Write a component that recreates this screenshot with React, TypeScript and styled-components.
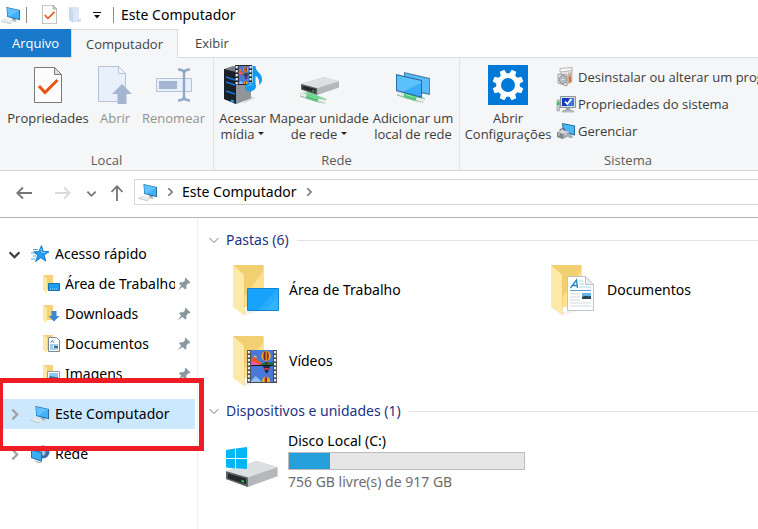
import React from "react";
import styled, { createGlobalStyle, css } from "styled-components";

const GlobalStyle = createGlobalStyle`
  * { box-sizing: border-box; }
  html, body, #root { height: 100%; }
  body {
    margin: 0;
    background: #fff;
    color: #000;
    font-family: "Noto Sans", "Open Sans", sans-serif;
    font-size: 14px;
    line-height: 20px;
    overflow: hidden;
  }
  button { font: inherit; color: inherit; background: none; border: 0; padding: 0; text-align: inherit; }
  a { color: inherit; text-decoration: none; }
  h1, h2, ul { margin: 0; padding: 0; font: inherit; list-style: none; }
  svg { display: block; flex: none; }
`;

/* ---------- Icons ---------- */

const PcIcon = ({ size = 20 }: { size?: number }) => (
  <svg width={size} height={size} viewBox="0 0 20 20" aria-hidden="true">
    <path d="M11.500 12.500l-.6 3 3.6.8.5-3z" fill="#9aa6b0" />
    <path d="M8.500 14.700l8 1.700-1.400.9-7.600-1.600z" fill="#c3c9ce" />
    <path d="M5.500 2l13.500 3v10.200L6.200 12z" fill="#2a6f9f" />
    <path d="M6.300 3l11.700 2.600v8.300L6.900 11.200z" fill="#41b1fb" />
    <path d="M6.300 3l11.700 2.600-9.500 6-1.600-.4z" fill="#62c1ff" />
    <path d="M4 13.600l9.800 2.400-3.800 2.500L0 15.900z" fill="#dde0e3" />
    <path d="M0 15.900l10 2.600v.8L0 16.700z" fill="#b9bfc4" />
    <path d="M2.400 15.500l7.900 2M3.900 14.600l7.700 1.900" stroke="#f4f6f7" strokeWidth=".7" />
  </svg>
);

const CheckPageIcon = ({ width = 28, height = 36 }: { width?: number; height?: number }) => (
  <svg width={width} height={height} viewBox="0 0 28 36" aria-hidden="true">
    <path d="M.5.5h20l7 7v28H.5z" fill="#fcfcfc" stroke="#7b7b7b" />
    <path d="M20.500.5v7h7z" fill="#dedede" stroke="#7b7b7b" />
    <path d="M5 19l6 6.500L23.500 13" fill="none" stroke="#e95412" strokeWidth="3" />
  </svg>
);

const BlankFolderIcon = () => (
  <svg width="14" height="18" viewBox="0 0 14 18" aria-hidden="true">
    <path d="M1 1h10v13l2 2H5z" fill="#dbe7f4" />
    <path d="M1 1l4 3v13l-4-3z" fill="#c6d8ea" />
    <path d="M9 13h4v3H9z" fill="#cfe0f1" />
  </svg>
);

const OpenIcon = () => (
  <svg width="34" height="38" viewBox="0 0 34 38" aria-hidden="true">
    <path d="M.5.5h20l7 7v28H.5z" fill="#e8f0fc" stroke="#b3c2dc" />
    <path d="M20.500.5v7h7z" fill="#f5f8fd" stroke="#b3c2dc" />
    <path d="M24 18l10 10h-5.500v10h-9V28H14z" fill="#a4b5d0" />
  </svg>
);

const RenameIcon = () => (
  <svg width="36" height="34" viewBox="0 0 36 34" aria-hidden="true">
    <path d="M.5 10.500h35v13H.5z" fill="#e8f0fc" stroke="#b3c2dc" />
    <path d="M3 13h18v8H3z" fill="#a4b5d0" />
    <path d="M22 1.500c4 0 6 1 6 4v23c0 3-2 4-6 4M34 1.500c-4 0-6 1-6 4v23c0 3 2 4 6 4" fill="none" stroke="#93a8c8" strokeWidth="2.400" />
  </svg>
);

const BalloonFrame = () => (
  <>
    <path d="M0 0h24v15H0z" fill="#4a78d8" />
    <path d="M0 9c3-3 5-1 7 1l5 3v2H0z" fill="#e8592a" />
    <path d="M0 12c4-1 6 1 9 3H0z" fill="#ef5db0" />
    <path d="M2 7l3-2 2 3z" fill="#f4a53b" />
    <path d="M9 15l5-2 10-1v3z" fill="#27683d" />
    <circle cx="16.500" cy="6" r="5" fill="#f2b51b" />
    <path d="M14.500 1.500c-1.500 3-1.500 6 0 9h1.500V1.200zM18 1.500c2 3 2 6 0 9h-.8V1.300z" fill="#7c2530" />
    <path d="M15.200 12h2.600v2h-2.600z" fill="#54330f" />
  </>
);

const Balloons = () => (
  <>
    <path d="M0 0h24v32H0z" fill="#161b25" />
    <BalloonFrame />
    <g transform="translate(0 16)">
      <path d="M0 0h24v16H0z" fill="#4a78d8" />
      <path d="M13 0h8l-3 7h-2z" fill="#23264d" />
      <path d="M14 2h6l-1 2h-4z" fill="#c93939" />
      <path d="M0 15l5-5 6 5v1H0z" fill="#8ec0f2" />
      <path d="M12 16c0-7 9-7 9 0z" fill="#f2b51b" />
      <path d="M15 11.500V16h2.500v-5z" fill="#9b2430" />
    </g>
  </>
);

const FilmHoles = ({ x, count }: { x: number; count: number }) => (
  <>
    {Array.from({ length: count }, (_, i) => (
      <rect key={i} x={x} y={1 + i * 4} width="2.200" height="2.400" fill="#e9edf0" />
    ))}
  </>
);

const MediaIcon = () => (
  <svg width="40" height="40" viewBox="0 0 40 40" aria-hidden="true">
    <path d="M27 31l5 2-13 6z" fill="#d5d8da" />
    <path d="M1 4l9-3 18 3v29l-15 6-12-5z" fill="#777d84" />
    <path d="M1 4l12 3v32L1 34z" fill="#1a2027" />
    <path d="M13 7l15-3v29l-15 6z" fill="#8f959b" />
    <path d="M3 12l9 3M3 17l9 3M3 26l9 3" stroke="#1276e3" strokeWidth="1.500" />
    <path d="M8 35.500l3 1.200" stroke="#2aa6ff" strokeWidth="2" />
    <path d="M12 0h17v20H12z" fill="#23272c" />
    <svg x="15.500" y="1" width="10.500" height="18" viewBox="0 0 24 32" preserveAspectRatio="none"><Balloons /></svg>
    <FilmHoles x={12.600} count={5} />
    <FilmHoles x={26.400} count={5} />
    <path d="M29.500 1h3c0 6 6.500 7 6.500 13 0 3-1 5-3 6 1-5-1-8-3.500-9v11h-3z" fill="#149bf0" />
    <ellipse cx="27.500" cy="22" rx="5.500" ry="4.300" fill="#149bf0" transform="rotate(-15 27.500 22)" />
    <path d="M24.500 21.500c1-2 4-2.500 5-1.500" stroke="#73c9fa" fill="none" />
  </svg>
);

const Cable = () => (
  <>
    <path d="M1 16l9-1 18 8-1 5-7-1L1 20z" fill="#7fd59b" />
    <path d="M1 15l8 2.500-1 4.500-7-3z" fill="#e4eae8" />
    <path d="M19 22l9 2.500-1 4-9-2.500z" fill="#e9eeec" />
    <path d="M8 17.500l12 4-1 5-12-4z" fill="#46c970" />
    <path d="M9 19l10 3.500" stroke="#9deab3" />
    <path d="M1 19.500l25 8.500" stroke="#a5b5af" strokeWidth=".8" />
  </>
);

const DriveShape = () => (
  <>
    <path d="M0 9L24 0l16 5.500v8L17 23 0 16z" fill="#b4b8bb" />
    <path d="M0 9L24 0l16 5.500-23 9z" fill="#dedfe1" />
    <path d="M0 9l17 5.500V23L0 16z" fill="#5d6165" />
    <path d="M1.500 11l14 4.500v5L1.500 15.500z" fill="#25292d" />
    <path d="M12 16.800l2 .7v1.600l-2-.7z" fill="#36dd5b" />
  </>
);

const MapDriveIcon = () => (
  <svg width="40" height="40" viewBox="0 0 40 40" aria-hidden="true">
    <g transform="translate(0 14) scale(.98 .87)"><Cable /></g>
    <g transform="translate(2 12) scale(.95 .78)"><DriveShape /></g>
  </svg>
);

const NetworkPlaceIcon = () => (
  <svg width="36" height="36" viewBox="0 0 36 36" aria-hidden="true">
    <g transform="translate(1 11) scale(1.030 .87)"><Cable /></g>
    <path d="M9 5l26 6v17L9 23z" fill="#4a85ad" />
    <path d="M10 6.500l24 5.500v14.500L10 21z" fill="#5cbcfa" />
    <path d="M1 7l26 6v18L1 24z" fill="#2d6b9a" />
    <path d="M2 8.500l24 5.500v15.500L2 23z" fill="#39acf7" />
    <path d="M2 8.500l24 5.500v2L8 24.600 2 23z" fill="#5cc0fc" />
  </svg>
);

const GearIcon = () => (
  <svg width="40" height="40" viewBox="0 0 40 40" aria-hidden="true">
    <path d="M0 0h40v40H0z" fill="#0078d7" />
    <g fill="#fff">
      {[0, 45, 90, 135, 180, 225, 270, 315].map((a) => (
        <path key={a} d="M16.700 10l.8-5.500h5l.8 5.500z" transform={`rotate(${a + 22.5} 20 20)`} />
      ))}
      <circle cx="20" cy="20" r="11.800" />
    </g>
    <circle cx="20" cy="20" r="7" fill="#0078d7" />
  </svg>
);

const UninstallIcon = () => (
  <svg width="20" height="20" viewBox="0 0 20 20" aria-hidden="true">
    <path d="M5 2l11-1v14l-7 3-4-2z" fill="#e3e3e3" stroke="#b1b1b1" strokeWidth=".7" />
    <path d="M4 1.500l12-1v3L4 5z" fill="#fafafa" stroke="#9e9e9e" strokeWidth=".7" />
    <path d="M12 6l4-1v10l-4 2z" fill="#c9b39f" />
    <path d="M13 9l2 1v4l-2 2z" fill="#d86b36" />
    <path d="M2 7l9 1v11l-9-3z" fill="#efefef" stroke="#888" strokeWidth=".8" />
    <ellipse cx="7" cy="12.500" rx="3.700" ry="4" fill="#bfc6cb" stroke="#747a7e" strokeWidth=".8" />
    <circle cx="7" cy="12.500" r="1.300" fill="#fff" stroke="#777" strokeWidth=".5" />
  </svg>
);

const SystemIcon = () => (
  <svg width="20" height="20" viewBox="0 0 20 20" aria-hidden="true">
    <path d="M1 6h2.500v11H1z" fill="#c8cdd1" stroke="#8b9297" strokeWidth=".6" />
    <path d="M1.200 8h2v3h-2z" fill="#35b94c" />
    <path d="M4.500 2.500h15v11h-15z" fill="#d7dde2" stroke="#8a949c" />
    <path d="M6 4h12v8H6z" fill="#143bb4" />
    <path d="M13 4h5v8h-7z" fill="#4372dc" />
    <path d="M9 7.500l2.300 2.500L15.500 5" fill="none" stroke="#fff" strokeWidth="1.800" />
    <path d="M10 14h4l1 2.500H9z" fill="#a2abb2" />
    <path d="M7 16.500h10l1 1.500H6z" fill="#c4cace" stroke="#8e979d" strokeWidth=".6" />
  </svg>
);

const ManageIcon = () => (
  <svg width="20" height="18" viewBox="0 0 20 18" aria-hidden="true">
    <path d="M6 1l13 2.500v10L7 11z" fill="#276f9f" />
    <path d="M7 2.200l11 2.100v7.800L8 10z" fill="#4bb8f5" />
    <path d="M13 13l3 .6 1 2.400-5-.5z" fill="#9da8af" />
    <path d="M1 10l6-2 6 2v4l-6 3-6-2z" fill="#a1a8ae" />
    <path d="M1 10l6-2 6 2-6 2z" fill="#d4d8da" />
    <path d="M1 10l6 2v5l-6-2z" fill="#81888e" />
    <path d="M4 9V7.500l3-1 2 1V9" fill="none" stroke="#5b6268" />
    <path d="M3 11.500v2M10 11.500v2" stroke="#e9ebec" />
  </svg>
);

const StarIcon = () => (
  <svg width="20" height="20" viewBox="0 0 20 20" aria-hidden="true">
    <path d="M11.500 1.500l1.700 5.800 5.800.4-4.800 3.300 1.500 6.200-4.800-3.500L5.500 17.500l2.200-6-4-3.700 5.200-.2z" fill="#2a9cf0" stroke="#1275c4" strokeWidth=".9" />
    <path d="M11 4.500l1 3.800 3.500.4" fill="none" stroke="#89cbf8" />
    <path d="M3 5.500h5M1 9h4M3 12h3M1 15h4" stroke="#56aeea" />
  </svg>
);

const DocumentLines = () => (
  <>
    <path d="M.5.5h18l8 8v26H.5z" fill="#fdfdfd" stroke="#c0c5c9" />
    <path d="M18.500.5v8h8z" fill="#eceeef" stroke="#c0c5c9" />
    <path d="M3.500 12l6-8 1 8M5.800 9.500H10" fill="none" stroke="#2383c8" strokeWidth="1.300" />
    <path d="M12 5h4M12 8h5M12 11h12" stroke="#a9ddec" />
    <path d="M3 14.500h21" stroke="#5da1d8" />
    <path d="M3 18h10M3 21h10M3 24h10M3 27h21M3 30h21" stroke="#d5d9dc" />
    <path d="M15 17h9v6h-9z" fill="#67b4ec" />
    <path d="M15 21c3-2 5 0 9-1v3h-9z" fill="#26465b" />
  </>
);

type FolderKind = "desktop" | "downloads" | "documents" | "pictures" | "videos";

const FolderIcon = ({ kind, small }: { kind: FolderKind; small?: boolean }) => (
  <svg width={small ? 18 : 48} height={small ? 20 : 52} viewBox={small ? "0 0 18 20" : "0 0 48 52"} aria-hidden="true">
    {small ? (
      <>
        <path d="M1 1h10v15H1z" fill="#f4d27a" />
        <path d="M1 1l4 3v15l-4-3z" fill="#ffe8a3" />
        {kind === "desktop" && <path d="M6.500 9.500h11v7h-11z" fill="#15a0f5" stroke="#176fae" />}
        {kind === "desktop" && <path d="M8 15h8" stroke="#9edaff" strokeDasharray="1 1" />}
        {kind === "downloads" && <path d="M9.500 7h5v5h3L12 17.500 6.500 12h3z" fill="#3a87d2" />}
        {kind === "documents" && (
          <>
            <path d="M6.500 3.500h8l3 3v11h-11z" fill="#fff" stroke="#7d878e" />
            <path d="M8.500 9l2-3 1 3M8 11h8M8 13h3M8 15h8" fill="none" stroke="#4d9bd2" />
            <path d="M12 12h4v2h-4z" fill="#376d91" />
          </>
        )}
        {kind === "pictures" && (
          <>
            <path d="M5.500 7.500h12v10h-12z" fill="#fff" stroke="#929ca3" />
            <path d="M7 9h9v7H7z" fill="#8bcaf4" />
            <path d="M7 13c3-2 5 1 9 0v3H7z" fill="#356b86" />
          </>
        )}
      </>
    ) : (
      <>
        <path d="M11 49l8-3v-3h13l-3 4-16 4z" fill="#e9e9e9" opacity=".6" />
        <path d="M1 1h30l1 1v41H12z" fill="#ffe08c" />
        <path d="M1 1h30v6L12 34z" fill="#f2d071" />
        <path d="M1 1l11 10v40L1 43z" fill="#ffe9a9" />
        <path d="M12 11l.5.500V51H12z" fill="#e8c768" />
        {kind === "desktop" && (
          <>
            <path d="M15.500 24.500h31v22h-31z" fill="#18a2fb" stroke="#1584d0" />
            <path d="M46 25v21H26z" fill="#33b3fd" />
            <path d="M46 25v8L33 46h-7z" fill="#2aaafa" />
          </>
        )}
        {kind === "documents" && <g transform="translate(17 12)"><DocumentLines /></g>}
        {kind === "videos" && (
          <>
            <path d="M15 15h30v33H15z" fill="#4b4e50" />
            <svg x="19" y="15" width="22" height="32" viewBox="0 0 24 32" preserveAspectRatio="none"><Balloons /></svg>
            <g transform="translate(0 15)"><FilmHoles x={15.800} count={8} /><FilmHoles x={42} count={8} /></g>
          </>
        )}
      </>
    )}
  </svg>
);

const PinIcon = () => (
  <svg width="14" height="14" viewBox="0 0 14 14" aria-hidden="true">
    <path d="M8.500.5l5 5-1.200.9-1-.1-2 2.200.1 2.900-1.200 1.200L2 6.500l1.300-1.300 2.800.1 2-2-.2-1.700z" fill="#8b979f" />
    <path d="M4.600 8l1.500 1.500L.8 13.500z" fill="#8b979f" />
  </svg>
);

const NetworkIcon = () => (
  <svg width="20" height="20" viewBox="0 0 20 20" aria-hidden="true">
    <circle cx="13" cy="8" r="6.500" fill="#3e6da8" />
    <path d="M9 4c2-2 4-2 5-2l-1 4 3 2-2 4-5-3z" fill="#a9bfd4" />
    <path d="M1 5l11 3v10L1 14z" fill="#286fa9" />
    <path d="M2 6.500l9 2.400v7.500L2 13.200z" fill="#3badf8" />
    <path d="M4 16l5 2 4-1-2 2H7z" fill="#b8bdc1" />
  </svg>
);

const DiskIcon = () => (
  <svg width="54" height="48" viewBox="0 0 54 48" aria-hidden="true">
    <g transform="translate(1 17) scale(1.290 1.130)"><DriveShape /></g>
    <path d="M0 2h23v23l-22-1z" fill="#fff" opacity=".3" />
    <path d="M1 6l9-1.400v9.400H1zM11 4.500L22 3v11H11zM1 15h9v9.400L1 23.500zM11 15h11v10l-11-.7z" fill="#00b6f4" />
  </svg>
);

type Direction = "right" | "down" | "left" | "up";
const turns: Record<Direction, number> = { right: 0, down: 90, left: 180, up: 270 };

const Chevron = ({ direction = "right", color = "#777", size = 12, weight = 1.5 }: { direction?: Direction; color?: string; size?: number; weight?: number }) => (
  <svg width={size} height={size} viewBox="0 0 12 12" aria-hidden="true">
    <path d="M4 1.500L8.500 6 4 10.500" fill="none" stroke={color} strokeWidth={weight} transform={`rotate(${turns[direction]} 6 6)`} />
  </svg>
);

const Arrow = ({ direction, color = "#747474" }: { direction: Direction; color?: string }) => (
  <svg width="16" height="16" viewBox="0 0 16 16" aria-hidden="true">
    <path d="M0 8h15M9 2.500L14.800 8 9 13.500" fill="none" stroke={color} strokeWidth="1.800" transform={`rotate(${turns[direction]} 8 8)`} />
  </svg>
);

/* ---------- Layout ---------- */

const Window = styled.div`
  display: flex;
  flex-direction: column;
  height: 100vh;
  overflow: hidden;
`;

const TitleBar = styled.header`
  display: flex;
  align-items: center;
  height: 29px;
  padding-left: 1px;
  flex: none;
`;

const TitleSeparator = styled.span<{ $before: number; $after: number }>`
  width: 1px;
  height: 16px;
  background: #8c8c8c;
  margin: 0 ${(p) => p.$after}px 0 ${(p) => p.$before}px;
`;

const QuickButtons = styled.div`
  display: flex;
  align-items: center;
  gap: 11px;
`;

const TabBar = styled.nav`
  display: flex;
  height: 29px;
  flex: none;
  border-bottom: 1px solid #dadbdc;
  font-family: "Open Sans", "Noto Sans", sans-serif;
  font-size: 13px;
`;

const Tab = styled.button<{ $kind?: "file" | "active" }>`
  padding: 0 17px;
  color: #444;
  ${(p) => p.$kind === "file" && css`padding: 0 12px; background: #1979ca; color: #fff;`}
  ${(p) =>
    p.$kind === "active" &&
    css`
      padding: 0 14px;
      margin-bottom: -1px;
      background: #f5f6f7;
      border: 1px solid #dadbdc;
      border-bottom: 0;
    `}
`;

const Ribbon = styled.div`
  display: flex;
  flex: none;
  height: 113px;
  overflow: hidden;
  background: #f5f6f7;
  border-bottom: 1px solid #d4d5d6;
  color: #3b3b3b;
  font-family: "Open Sans", "Noto Sans", sans-serif;
  font-size: 13px;
  line-height: 16px;
`;

const RibbonGroup = styled.section`
  display: flex;
  flex-direction: column;
  flex: none;
  justify-content: space-between;
  padding: 6px 4px 2px;
  & + & { border-left: 1px solid #e1e2e3; }
`;

const GroupName = styled.h2`
  text-align: center;
  color: #5a5a5a;
`;

const GroupItems = styled.div`
  display: flex;
  align-items: flex-start;
`;

const BigButton = styled.button<{ $width: number }>`
  display: flex;
  flex-direction: column;
  align-items: center;
  gap: 4px;
  width: ${(p) => p.$width}px;
  text-align: center;
  white-space: nowrap;
  &:disabled { color: #929292; }
`;

const IconSlot = styled.span`
  display: flex;
  align-items: center;
  justify-content: center;
  height: 42px;
`;

const Caret = styled.span`
  display: inline-block;
  margin-left: 4px;
  vertical-align: 4px;
  border: 3px solid transparent;
  border-top-color: #222;
  border-bottom: 0;
`;

const CommandList = styled.div`
  display: flex;
  flex-direction: column;
  width: 240px;
  padding-left: 4px;
`;

const Command = styled.button`
  display: flex;
  align-items: center;
  gap: 2px;
  height: 27px;
  margin-top: -1px;
  margin-bottom: 1px;
  white-space: nowrap;
`;

const AddressRow = styled.div`
  display: flex;
  align-items: center;
  flex: none;
  height: 47px;
  padding: 0 0 4px 16px;
  border-bottom: 1px solid #b5b5b5;
`;

const HistoryButtons = styled.div`
  display: flex;
  align-items: center;
  width: 118px;
  padding-top: 2px;
`;

const HistoryButton = styled.button<{ $gap: number }>`
  margin-right: ${(p) => p.$gap}px;
`;

const AddressBar = styled.div`
  display: flex;
  align-items: center;
  flex: 1;
  height: 26px;
  gap: 7px;
  padding-left: 3px;
  border: 1px solid #d9d9d9;
  border-right: 0;
`;

const Body = styled.div`
  display: flex;
  flex: 1;
  min-height: 0;
`;

const Sidebar = styled.nav`
  width: 198px;
  flex: none;
  padding: 21px 2px 0 0;
  border-right: 1px solid #efefef;
`;

const NavRow = styled.li<{ $child?: boolean; $selected?: boolean; $spaced?: boolean }>`
  position: relative;
  display: flex;
  align-items: center;
  height: 30px;
  margin-top: ${(p) => (p.$spaced ? 10 : 0)}px;
  padding-left: ${(p) => (p.$child ? 42 : 8)}px;
  padding-right: 4px;
  ${(p) => p.$selected && css`background: #cce8ff;`}
`;

const Toggle = styled.button`
  width: 22px;
`;

const NavLink = styled.a`
  display: flex;
  align-items: center;
  flex: 1;
  gap: 5px;
  min-width: 0;
  white-space: nowrap;
`;

const NavLabel = styled.span`
  flex: 1;
  overflow: hidden;
`;

const PinSlot = styled.span`
  margin-left: 2px;
`;

const Highlight = styled.div`
  position: absolute;
  top: -21px;
  bottom: -22px;
  left: 0;
  width: 204px;
  border: 5px solid #ee1c24;
  border-left-width: 3px;
  pointer-events: none;
  z-index: 1;
`;

const Content = styled.main`
  flex: 1;
  min-width: 0;
  overflow: hidden;
  padding: 12px 0 0 10px;
`;

const SectionHeader = styled.h2`
  display: flex;
  align-items: center;
  gap: 6px;
  color: #1e3287;
  &::after {
    content: "";
    flex: 1;
    height: 1px;
    margin-left: 2px;
    background: #e2e2e2;
  }
`;

const SectionToggle = styled.button`
  display: flex;
  align-items: center;
  gap: 6px;
`;

const Tiles = styled.div`
  display: grid;
  grid-template-columns: 318px 1fr;
  padding: 4px 0 5px 24px;
`;

const Tile = styled.a`
  display: flex;
  align-items: center;
  gap: 9px;
  height: 71px;
  white-space: nowrap;
`;

const DriveTile = styled.a`
  display: flex;
  align-items: flex-end;
  gap: 9px;
  padding: 10px 0 0 17px;
`;

const DriveInfo = styled.span`
  display: flex;
  flex-direction: column;
  width: 237px;
`;

const Meter = styled.span`
  display: block;
  height: 18px;
  margin: 1px 0 2px;
  background: #e6e6e6;
  border: 1px solid #bcbcbc;
`;

const MeterFill = styled.span`
  display: block;
  height: 100%;
  background: #26a0da;
`;

const DriveSpace = styled.span`
  color: #6d6d6d;
`;

const folders: { name: string; kind: FolderKind }[] = [
  { name: "Área de Trabalho", kind: "desktop" },
  { name: "Documentos", kind: "documents" },
  { name: "Vídeos", kind: "videos" },
];

const pinned: { name: string; kind: FolderKind }[] = [
  { name: "Área de Trabalho", kind: "desktop" },
  { name: "Downloads", kind: "downloads" },
  { name: "Documentos", kind: "documents" },
  { name: "Imagens", kind: "pictures" },
];

const drive = { name: "Disco Local (C:)", free: 756, total: 917 };

export default function App() {
  const used = ((drive.total - drive.free) / drive.total) * 100;
  return (
    <Window>
      <GlobalStyle />
      <TitleBar>
        <PcIcon />
        <TitleSeparator $before={5} $after={15} />
        <QuickButtons>
          <button aria-label="Propriedades"><CheckPageIcon width={15} height={19} /></button>
          <button aria-label="Nova pasta"><BlankFolderIcon /></button>
          <button aria-label="Personalizar">
            <svg width="8" height="8" viewBox="0 0 8 8" aria-hidden="true"><path d="M0 1h8v1H0zM1 4h6L4 7.500z" fill="#111" /></svg>
          </button>
        </QuickButtons>
        <TitleSeparator $before={12} $after={7} />
        <h1>Este Computador</h1>
      </TitleBar>
      <TabBar>
        <Tab $kind="file">Arquivo</Tab>
        <Tab $kind="active">Computador</Tab>
        <Tab>Exibir</Tab>
      </TabBar>
      <Ribbon>
        <RibbonGroup>
          <GroupItems>
            <BigButton $width={88}><IconSlot><CheckPageIcon /></IconSlot>Propriedades</BigButton>
            <BigButton $width={46} disabled><IconSlot><OpenIcon /></IconSlot>Abrir</BigButton>
            <BigButton $width={71} disabled><IconSlot><RenameIcon /></IconSlot>Renomear</BigButton>
          </GroupItems>
          <GroupName>Local</GroupName>
        </RibbonGroup>
        <RibbonGroup>
          <GroupItems>
            <BigButton $width={49}><IconSlot><MediaIcon /></IconSlot><span>Acessar<br />mídia<Caret /></span></BigButton>
            <BigButton $width={104}><IconSlot><MapDriveIcon /></IconSlot><span>Mapear unidade<br />de rede<Caret /></span></BigButton>
            <BigButton $width={84}><IconSlot><NetworkPlaceIcon /></IconSlot><span>Adicionar um<br />local de rede</span></BigButton>
          </GroupItems>
          <GroupName>Rede</GroupName>
        </RibbonGroup>
        <RibbonGroup>
          <GroupItems>
            <BigButton $width={88}><IconSlot><GearIcon /></IconSlot><span>Abrir<br />Configurações</span></BigButton>
            <CommandList>
              <Command><UninstallIcon />Desinstalar ou alterar um programa</Command>
              <Command><SystemIcon />Propriedades do sistema</Command>
              <Command><ManageIcon />Gerenciar</Command>
            </CommandList>
          </GroupItems>
          <GroupName>Sistema</GroupName>
        </RibbonGroup>
      </Ribbon>
      <AddressRow>
        <HistoryButtons>
          <HistoryButton $gap={23} aria-label="Voltar"><Arrow direction="left" /></HistoryButton>
          <HistoryButton $gap={15} aria-label="Avançar" disabled><Arrow direction="right" color="#d9dadb" /></HistoryButton>
          <HistoryButton $gap={12} aria-label="Locais recentes"><Chevron direction="down" weight={2} size={11} /></HistoryButton>
          <HistoryButton $gap={0} aria-label="Acima"><Arrow direction="up" /></HistoryButton>
        </HistoryButtons>
        <AddressBar>
          <PcIcon />
          <Chevron weight={2} size={10} />
          <a href="#pc">Este Computador</a>
          <Chevron weight={2} size={10} />
        </AddressBar>
      </AddressRow>
      <Body>
        <Sidebar>
          <ul>
            <NavRow>
              <Toggle aria-label="Recolher"><Chevron direction="down" color="#3b3b3b" weight={2} size={13} /></Toggle>
              <NavLink href="#rapido"><StarIcon /><NavLabel>Acesso rápido</NavLabel></NavLink>
            </NavRow>
            {pinned.map((p) => (
              <NavRow key={p.name} $child>
                <NavLink href={`#${p.kind}`}><FolderIcon kind={p.kind} small /><NavLabel>{p.name}</NavLabel></NavLink>
                <PinSlot><PinIcon /></PinSlot>
              </NavRow>
            ))}
            <NavRow $selected $spaced>
              <Toggle aria-label="Expandir"><Chevron color="#a0a0a0" weight={2} size={13} /></Toggle>
              <NavLink href="#pc"><PcIcon /><NavLabel>Este Computador</NavLabel></NavLink>
              <Highlight />
            </NavRow>
            <NavRow $spaced>
              <Toggle aria-label="Expandir"><Chevron color="#a0a0a0" weight={2} size={13} /></Toggle>
              <NavLink href="#rede"><NetworkIcon /><NavLabel>Rede</NavLabel></NavLink>
            </NavRow>
          </ul>
        </Sidebar>
        <Content>
          <SectionHeader><SectionToggle><Chevron direction="down" weight={1} />Pastas (6)</SectionToggle></SectionHeader>
          <Tiles>
            {folders.map((f) => (
              <Tile key={f.name} href={`#${f.kind}`}><FolderIcon kind={f.kind} />{f.name}</Tile>
            ))}
          </Tiles>
          <SectionHeader><SectionToggle><Chevron direction="down" weight={1} />Dispositivos e unidades (1)</SectionToggle></SectionHeader>
          <DriveTile href="#c">
            <DiskIcon />
            <DriveInfo>
              <span>{drive.name}</span>
              <Meter role="meter" aria-label="Espaço usado" aria-valuenow={Math.round(used)} aria-valuemin={0} aria-valuemax={100}>
                <MeterFill style={{ width: `${used}%` }} />
              </Meter>
              <DriveSpace>{drive.free} GB livre(s) de {drive.total} GB</DriveSpace>
            </DriveInfo>
          </DriveTile>
        </Content>
      </Body>
    </Window>
  );
}
